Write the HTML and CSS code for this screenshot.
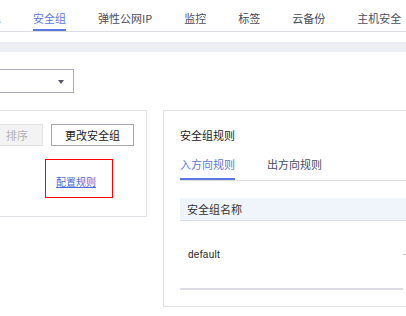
FILE: index.html
```html
<!DOCTYPE html>
<html lang="zh-CN">
<head>
    <meta charset="UTF-8">
    <meta name="viewport" content="width=device-width, initial-scale=1.0">
    <title>安全组</title>
    <link rel="stylesheet" href="styles.css">
</head>
<body>
    <div class="tabs-top">
        <a class="tab-top tab-first">基本信息</a>
        <a class="tab-top activo">安全组</a>
        <a class="tab-top">弹性公网IP</a>
        <a class="tab-top">监控</a>
        <a class="tab-top">标签</a>
        <a class="tab-top">云备份</a>
        <a class="tab-top">主机安全</a>
    </div>
    <div class="franja"></div>

    <div class="selector">
        <span class="flecha"></span>
    </div>

    <div class="fila">
        <div class="tarjeta-izq">
            <div class="botones">
                <span class="boton deshabilitado">排序</span>
                <span class="boton">更改安全组</span>
            </div>
            <div class="caja-roja">
                <a class="enlace">配置规则</a>
            </div>
        </div>

        <div class="tarjeta-der">
            <div class="titulo">安全组规则</div>
            <div class="subtabs">
                <span class="subtab activo">入方向规则</span>
                <span class="subtab">出方向规则</span>
            </div>
            <div class="tabla">
                <div class="cabecera">安全组名称</div>
                <div class="fila-tabla">
                    <span>default</span>
                    <span class="guion"></span>
                </div>
            </div>
        </div>
    </div>
</body>
</html>
```

FILE: styles.css
```css
html, body {
    overflow: hidden;
}

body {
    margin: 0;
    width: 406px;
    font-family: "Noto Sans CJK SC", "Liberation Sans", sans-serif;
    font-size: 11px;
    color: #222;
    background-color: white;
}

.tabs-top {
    display: flex;
    gap: 32px;
    height: 31px;
    border-bottom: 1px solid #dcdce2;
    box-sizing: content-box;
}

.tab-top {
    height: 29px;
    line-height: 16px;
    padding-top: 10px;
    box-sizing: border-box;
    color: #4a4c5a;
    white-space: nowrap;
}

.tab-first {
    margin-left: -43px;
}

.tab-top.activo {
    color: #5a78dd;
    border-bottom: 2px solid #5a78dd;
    height: 31px;
}

.franja {
    margin-top: 10px;
    height: 10px;
    background-color: #eeeff4;
}

.selector {
    margin-top: 17px;
    margin-left: -20px;
    width: 94px;
    height: 24px;
    border: 1px solid #aaaabf;
    box-sizing: border-box;
    position: relative;
}

.flecha {
    position: absolute;
    right: 9px;
    top: 10px;
    border-left: 3px solid transparent;
    border-right: 3px solid transparent;
    border-top: 4px solid #55566a;
}

.fila {
    display: flex;
    gap: 16px;
    margin-top: 17px;
}

.tarjeta-izq {
    flex: none;
    margin-left: -10px;
    width: 157px;
    height: 107px;
    border: 1px solid #e1e1e7;
    box-sizing: border-box;
    padding: 13px 12px 0 12px;
}

.botones {
    display: flex;
    justify-content: flex-end;
    gap: 8px;
}

.boton {
    flex: none;
    height: 22px;
    line-height: 20px;
    padding: 0 13px;
    border: 1px solid #a5a5ae;
    box-sizing: border-box;
    color: #222;
    white-space: nowrap;
}

.boton.deshabilitado {
    width: 52px;
    text-align: center;
    padding: 0;
    color: #b3b3b3;
    background-color: #f3f3f3;
    border-color: #e3e3e3;
}

.caja-roja {
    margin-top: 13px;
    margin-left: 42px;
    width: 68px;
    height: 39px;
    border: 1px solid #f00;
    box-sizing: border-box;
    padding: 13px 0 0 10px;
}

.enlace {
    font-size: 10px;
    line-height: 14px;
    color: #4b6bd6;
    text-decoration: underline;
}

.tarjeta-der {
    flex: none;
    width: 300px;
    height: 197px;
    border: 1px solid #e1e1e7;
    box-sizing: border-box;
    padding: 16px 0 0 16px;
}

.titulo {
    line-height: 16px;
    color: #222;
}

.subtabs {
    display: flex;
    gap: 32px;
    margin-top: 13px;
    border-bottom: 1px solid #dedee4;
}

.subtab {
    line-height: 16px;
    padding-bottom: 6px;
    border-bottom: 2px solid transparent;
    color: #4a4c5a;
}

.subtab.activo {
    color: #5a78dd;
    border-bottom-color: #5a78dd;
}

.tabla {
    margin-top: 17px;
}

.cabecera {
    height: 23px;
    line-height: 22px;
    padding-left: 7px;
    background-color: #f0f4fb;
    border-bottom: 1px solid #dedee6;
    box-sizing: border-box;
    color: #333;
}

.fila-tabla {
    display: flex;
    align-items: center;
    justify-content: space-between;
    height: 69px;
    padding-left: 8px;
    border-bottom: 2px solid #dcdce2;
    box-sizing: border-box;
    font-family: "Liberation Sans", sans-serif;
    font-size: 10px;
    letter-spacing: 0.3px;
    width: 223px;
}

.guion {
    width: 3px;
    height: 1px;
    margin-right: -3px;
    background-color: #c8c8cc;
}
```
